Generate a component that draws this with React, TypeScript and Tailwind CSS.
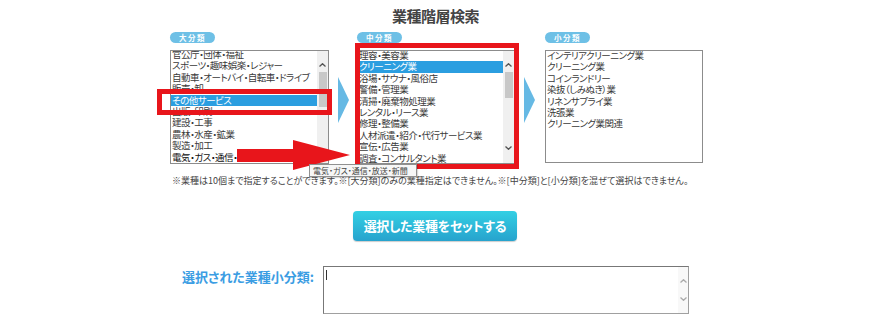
import React from 'react';

const majors = [
  '官公庁・団体・福祉',
  'スポーツ・趣味娯楽・レジャー',
  '自動車・オートバイ・自転車・ドライブ',
  '販売・卸',
  'その他サービス',
  '出版・印刷',
  '建設・工事',
  '農林・水産・鉱業',
  '製造・加工',
  '電気・ガス・通信・放送・新聞',
];

const middles = [
  '理容・美容業',
  'クリーニング業',
  '浴場・サウナ・風俗店',
  '警備・管理業',
  '清掃・廃棄物処理業',
  'レンタル・リース業',
  '修理・整備業',
  '人材派遣・紹介・代行サービス業',
  '宣伝・広告業',
  '調査・コンサルタント業',
];

const minors = [
  'インテリアクリーニング業',
  'クリーニング業',
  'コインランドリー',
  '染抜（しみぬき）業',
  'リネンサプライ業',
  '洗張業',
  'クリーニング業関連',
];

const ArrowUp = ({ color = '#555' }: { color?: string }) => (
  <svg width="7" height="4" viewBox="0 0 7 4">
    <polyline points="0.5,3.5 3.5,0.7 6.5,3.5" fill="none" stroke={color} strokeWidth="1.3" />
  </svg>
);

const ArrowDown = ({ color = '#555' }: { color?: string }) => (
  <svg width="7" height="4" viewBox="0 0 7 4">
    <polyline points="0.5,0.5 3.5,3.3 6.5,0.5" fill="none" stroke={color} strokeWidth="1.3" />
  </svg>
);

const ScrollBar: React.FC<{ thumb: string; down?: boolean }> = ({ thumb, down }) => (
  <div className="w-[11px] bg-[#f0f0f0] flex flex-col items-center shrink-0">
    <div className="h-[21px] flex items-end pb-[5px]">
      <ArrowUp />
    </div>
    <div className={`w-[8px] bg-[#c8c8c8] ${thumb}`} />
    <div className="flex-1" />
    {down && (
      <div className="h-[20px] flex items-start pt-[3px]">
        <ArrowDown />
      </div>
    )}
  </div>
);

const Badge: React.FC<{ label: string }> = ({ label }) => (
  <div className="w-[45px] h-[11px] rounded-full bg-[#6ec0e6] flex items-center justify-center text-white text-[7.5px] font-bold tracking-[1.5px] leading-none">
    {label}
  </div>
);

const Chevron = () => (
  <svg width="11" height="46" viewBox="0 0 11 46" className="mt-[45px] shrink-0">
    <polygon points="0,0 11,23 0,46" fill="#66b9e4" />
  </svg>
);

type ListProps = {
  items: string[];
  selected?: number;
  offset: string;
  height: string;
  scroll?: React.ReactNode;
  dark?: number;
};

const ListBox: React.FC<ListProps> = ({ items, selected, offset, height, scroll, dark }) => (
  <div className={`flex border border-[#8c8c8c] bg-white overflow-hidden ${height}`}>
    <ul className={`flex-1 min-w-0 ${offset}`}>
      {items.map((it, i) => (
        <li
          key={it}
          className={`pl-[1px] text-[9.5px] leading-[11.4px] tracking-[-0.5px] whitespace-nowrap ${
            i === selected ? 'bg-[#2b9ee0] text-white' : i === dark ? 'text-[#111]' : 'text-[#3a3a3a]'
          }`}
        >
          {it}
        </li>
      ))}
    </ul>
    {scroll}
  </div>
);

export default function App() {
  return (
    <div className="relative w-full h-[329px] bg-white font-['Noto_Sans_CJK_JP','Noto_Sans',sans-serif] [font-feature-settings:'palt'] overflow-hidden">
      <div className="w-[535px] mx-auto">
        {/* Title */}
        <h1 className="pt-[7px] text-center text-[15px] leading-[18px] font-bold text-[#444] pr-[4px] [font-feature-settings:normal] tracking-[-0.5px]">
          業種階層検索
        </h1>

        {/* Three level lists */}
        <div className="mt-[7px] flex items-start">
          <div className="w-[159px] shrink-0">
            <Badge label="大分類" />
            <div className="mt-[7px]">
              <ListBox
                items={majors}
                selected={4}
                dark={9}
                offset="-mt-[2px]"
                height="h-[114px]"
                scroll={<ScrollBar thumb="h-[35px]" />}
              />
            </div>
          </div>
          <div className="ml-[9px]">
            <Chevron />
          </div>
          <div className="w-[158px] ml-[8px] shrink-0">
            <Badge label="中分類" />
            <div className="mt-[7px]">
              <ListBox
                items={middles}
                selected={1}
                offset="-mt-[1px]"
                height="h-[114px]"
                scroll={<ScrollBar thumb="h-[26px]" down />}
              />
            </div>
          </div>
          <div className="ml-[9px]">
            <Chevron />
          </div>
          <div className="w-[158px] ml-[10px] shrink-0">
            <Badge label="小分類" />
            <div className="mt-[7px]">
              <ListBox items={minors} offset="-mt-[1px]" height="h-[113px]" />
            </div>
          </div>
        </div>

        {/* Note */}
        <p className="mt-[11px] ml-[2px] text-[9px] leading-[12px] text-[#444] whitespace-nowrap">
          ※業種は10個まで指定することができます。※[大分類]のみの業種指定はできません。※[中分類]と[小分類]を混ぜて選択はできません。
        </p>

        {/* Button */}
        <div className="mt-[24px] flex justify-center pr-[5px]">
          <button className="w-[164px] h-[30px] rounded-[4px] bg-gradient-to-b from-[#33d0e4] to-[#27a3cd] shadow-[0_1px_1px_rgba(0,0,0,0.2)] text-white text-[13px] font-bold tracking-[-0.3px]">
            選択した業種をセットする
          </button>
        </div>

        {/* Selected */}
        <div className="mt-[25px] flex items-start">
          <div className="w-[153px] pr-[9px] pt-[3px] text-right text-[13px] leading-[16px] font-bold text-[#3b9de3] whitespace-nowrap">
            選択された業種小分類:
          </div>
          <div className="w-[366px] h-[48px] flex border border-[#a0a0a0] border-t-[#777] border-l-[#777] bg-white">
            <div className="flex-1 pl-[2px] pt-[3px]">
              <div className="w-px h-[10px] bg-[#333]" />
            </div>
            <div className="w-[10px] bg-[#f8f8f8] flex flex-col items-center justify-between py-[12px]">
              <ArrowUp color="#aaa" />
              <ArrowDown color="#aaa" />
            </div>
          </div>
        </div>
      </div>

      {/* Annotations */}
      <div className="absolute left-[157px] top-[89px] w-[175px] h-[26px] border-[5px] border-[#e8151b]" />
      <div className="absolute left-[355px] top-[43px] w-[164px] h-[126px] border-[5px] border-[#e8151b]" />
      <svg className="absolute left-[237px] top-[140px]" width="113" height="30" viewBox="0 0 113 30">
        <polygon points="0,9 56,9 56,0 113,15 56,30 56,22 0,22" fill="#e8151b" />
      </svg>
      <div className="absolute left-[309px] top-[164px] w-[108px] h-[13px] bg-[#f6f6f6] border border-[#909090] shadow-[1px_1px_1px_rgba(0,0,0,0.15)] pl-[3px] text-[8px] leading-[11px] text-[#444] whitespace-nowrap overflow-hidden">
        電気・ガス・通信・放送・新聞
      </div>
    </div>
  );
}
